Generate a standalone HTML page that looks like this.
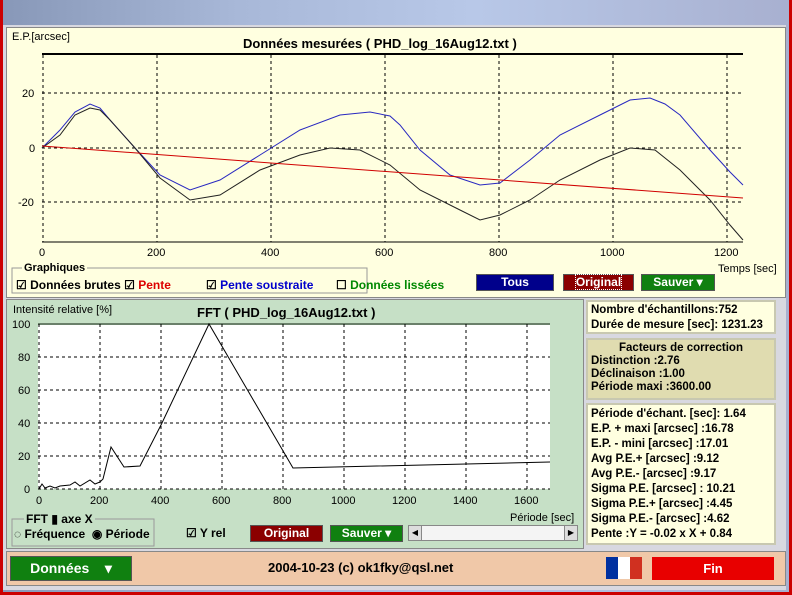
<!DOCTYPE html>
<html><head><meta charset="utf-8"><style>
body{margin:0;width:792px;height:595px;overflow:hidden;background:#c00;font-family:"Liberation Sans",sans-serif;position:relative}
.a{position:absolute}
.b{font-weight:bold;font-size:12px}
.btn{position:absolute;color:#fff;font-weight:bold;font-size:12px;text-align:center;box-sizing:border-box;border:1px solid #555}
</style></head><body>
<div class="a" style="left:3px;top:0;width:786px;height:592px;background:linear-gradient(90deg,#8898b8,#a8b8d8 30%,#b8c8e8 60%,#a8b0d0)"></div>
<div class="a" style="left:3px;top:25px;width:783px;height:565px;background:#d8d8e0"></div>
<!-- top panel -->
<div class="a" style="left:6px;top:27px;width:778px;height:269px;background:#ffffe0;border:1px solid #888"></div>
<div class="a" style="left:12px;top:31px;font-size:11px">E.P.[arcsec]</div>
<div class="a b" style="left:243px;top:36px;font-size:13px">Données mesurées ( PHD_log_16Aug12.txt )</div>
<svg class="a" style="left:0;top:0" width="792" height="300">
<g stroke="#000" stroke-dasharray="3,3" stroke-width="1" fill="none">
<line x1="157" y1="55" x2="157" y2="242"/><line x1="271" y1="55" x2="271" y2="242"/><line x1="385" y1="55" x2="385" y2="242"/><line x1="499" y1="55" x2="499" y2="242"/><line x1="613" y1="55" x2="613" y2="242"/><line x1="727" y1="55" x2="727" y2="242"/>
<line x1="42" y1="93" x2="743" y2="93"/><line x1="42" y1="148" x2="743" y2="148"/><line x1="42" y1="202" x2="743" y2="202"/>
<line x1="43" y1="55" x2="43" y2="242"/>
</g>
<line x1="42" y1="54" x2="743" y2="54" stroke="#000" stroke-width="2"/>
<line x1="42" y1="242" x2="743" y2="242" stroke="#000"/>
<polyline fill="none" stroke="#2828c0" points="42,148 60,130 75,112 90,104 100,108 110,120 135,148 160,175 190,190 220,180 260,155 300,130 340,115 370,112 390,116 400,125 420,150 450,175 480,185 500,183 530,160 560,135 600,115 630,100 650,98 665,104 680,115 710,150 730,172 743,185"/>
<polyline fill="none" stroke="#222" points="42,148 60,135 75,115 90,108 100,110 110,120 135,148 160,178 190,200 220,195 260,170 300,155 330,148 360,150 390,165 420,190 460,210 480,220 500,215 530,200 560,180 600,160 630,148 655,150 680,170 710,200 730,225 743,240"/>
<line x1="42" y1="146" x2="743" y2="198" stroke="#d00000"/>
<g font-size="11" fill="#000" font-family="Liberation Sans">
<text x="22" y="97">20</text><text x="29" y="152">0</text><text x="18" y="206">-20</text>
<text x="39" y="256">0</text><text x="147" y="256">200</text><text x="261" y="256">400</text><text x="375" y="256">600</text><text x="489" y="256">800</text><text x="600" y="256">1000</text><text x="714" y="256">1200</text>
<text x="718" y="272">Temps [sec]</text>
</g>
<rect x="12" y="268" width="355" height="25" fill="none" stroke="#999"/>
</svg>
<div class="a b" style="left:22px;top:262px;background:#ffffe0;padding:0 2px;font-size:11px">Graphiques</div>
<div class="a b" style="left:16px;top:278px">☑ Données brutes ☑ <span style="color:#d00">Pente</span></div>
<div class="a b" style="left:206px;top:278px">☑ <span style="color:#00c">Pente soustraite</span></div>
<div class="a b" style="left:336px;top:278px">☐ <span style="color:#080">Données lissées</span></div>
<div class="btn" style="left:476px;top:274px;width:78px;height:17px;background:#00008b;line-height:15px">Tous</div>
<div class="btn" style="left:563px;top:274px;width:71px;height:17px;background:#8b0000;line-height:15px"><span style="outline:1px dotted #fff">Original</span></div>
<div class="btn" style="left:641px;top:274px;width:74px;height:17px;background:#108010;line-height:15px">Sauver ▾</div>
<!-- FFT panel -->
<div class="a" style="left:6px;top:299px;width:576px;height:248px;background:#c6e0c6;border:1px solid #888"></div>
<div class="a" style="left:13px;top:304px;font-size:11px">Intensité relative [%]</div>
<div class="a b" style="left:197px;top:305px;font-size:13px">FFT ( PHD_log_16Aug12.txt )</div>
<svg class="a" style="left:0;top:300px" width="580" height="250">
<rect x="38" y="24" width="512" height="165" fill="#fff"/>
<line x1="38" y1="24" x2="550" y2="24" stroke="#6a806a" stroke-width="2"/>
<g stroke="#000" stroke-dasharray="3,3" fill="none">
<line x1="100" y1="24" x2="100" y2="189"/><line x1="161" y1="24" x2="161" y2="189"/><line x1="222" y1="24" x2="222" y2="189"/><line x1="283" y1="24" x2="283" y2="189"/><line x1="344" y1="24" x2="344" y2="189"/><line x1="405" y1="24" x2="405" y2="189"/><line x1="466" y1="24" x2="466" y2="189"/><line x1="527" y1="24" x2="527" y2="189"/>
<line x1="38" y1="57" x2="550" y2="57"/><line x1="38" y1="90" x2="550" y2="90"/><line x1="38" y1="123" x2="550" y2="123"/><line x1="38" y1="156" x2="550" y2="156"/><line x1="38" y1="189" x2="550" y2="189"/>
<line x1="39" y1="24" x2="39" y2="189"/>
</g>
<polyline fill="none" stroke="#000" points="39,189 42,184 45,188 50,186 55,188 60,186 70,185 75,182 80,186 90,180 95,184 100,182 103,179 111,147 124,167 140,166 161,125 209,24 293,168 550,162"/>
<g font-size="11" font-family="Liberation Sans">
<text x="12" y="28">100</text><text x="18" y="61">80</text><text x="18" y="94">60</text><text x="18" y="127">40</text><text x="18" y="160">20</text><text x="24" y="193">0</text>
<text x="36" y="204">0</text><text x="90" y="204">200</text><text x="151" y="204">400</text><text x="212" y="204">600</text><text x="273" y="204">800</text><text x="331" y="204">1000</text><text x="392" y="204">1200</text><text x="453" y="204">1400</text><text x="514" y="204">1600</text>
<text x="510" y="221">Période [sec]</text>
</g>
<rect x="12" y="219" width="142" height="27" fill="none" stroke="#999"/>
</svg>
<div class="a b" style="left:24px;top:512px;background:#c6e0c6;padding:0 2px">FFT ▮ axe X</div>
<div class="a b" style="left:14px;top:527px">◌ Fréquence &nbsp;◉ Période</div>
<div class="a b" style="left:186px;top:526px">☑ Y rel</div>
<div class="btn" style="left:250px;top:525px;width:73px;height:17px;background:#8b0000;line-height:15px">Original</div>
<div class="btn" style="left:330px;top:525px;width:73px;height:17px;background:#108010;line-height:15px">Sauver ▾</div>
<div class="a" style="left:408px;top:525px;width:170px;height:16px;background:#f4f4f4;border:1px solid #888;box-sizing:border-box"></div>
<div class="a" style="left:408px;top:525px;width:14px;height:16px;background:#ddd;border:1px solid #888;box-sizing:border-box;font-size:8px;text-align:center;line-height:14px">◀</div>
<div class="a" style="left:564px;top:525px;width:14px;height:16px;background:#ddd;border:1px solid #888;box-sizing:border-box;font-size:8px;text-align:center;line-height:14px">▶</div>
<!-- right boxes -->
<div class="a b" style="left:586px;top:300px;width:190px;height:34px;background:#ffffe0;border:2px solid #c8c8b0;box-sizing:border-box;padding:1px 3px;line-height:15px;font-size:11.5px">Nombre d'échantillons:752<br>Durée de mesure [sec]: 1231.23</div>
<div class="a b" style="left:586px;top:338px;width:190px;height:62px;background:#e0dcb0;border:2px solid #c8c8b0;box-sizing:border-box;padding:2px 3px;line-height:13px;font-size:11.5px"><div style="text-align:center">Facteurs de correction</div>Distinction :2.76<br>Déclinaison :1.00<br>Période maxi :3600.00</div>
<div class="a b" style="left:586px;top:403px;width:190px;height:142px;background:#ffffe0;border:2px solid #c8c8b0;box-sizing:border-box;padding:2px 3px;line-height:15px;font-size:11.5px">Période d'échant. [sec]: 1.64<br>E.P. + maxi [arcsec] :16.78<br>E.P. - mini [arcsec] :17.01<br>Avg P.E.+ [arcsec] :9.12<br>Avg P.E.- [arcsec] :9.17<br>Sigma P.E. [arcsec] : 10.21<br>Sigma P.E.+ [arcsec] :4.45<br>Sigma P.E.- [arcsec] :4.62<br>Pente :Y = -0.02 x X + 0.84</div>
<!-- bottom bar -->
<div class="a" style="left:6px;top:551px;width:778px;height:33px;background:#f0c8a8;border:1px solid #888"></div>
<div class="btn" style="left:10px;top:556px;width:122px;height:25px;background:#108010;line-height:23px;font-size:14px">Données &nbsp;&nbsp;&nbsp;▾</div>
<div class="a b" style="left:268px;top:560px;font-size:13px">2004-10-23 (c) ok1fky@qsl.net</div>
<div class="a" style="left:606px;top:557px;width:12px;height:22px;background:#0030a0"></div>
<div class="a" style="left:618px;top:557px;width:12px;height:22px;background:#fff"></div>
<div class="a" style="left:630px;top:557px;width:12px;height:22px;background:#d03020"></div>
<div class="btn" style="left:652px;top:557px;width:122px;height:23px;background:#e80000;border:none;line-height:23px;font-size:13px">Fin</div>
</body></html>
